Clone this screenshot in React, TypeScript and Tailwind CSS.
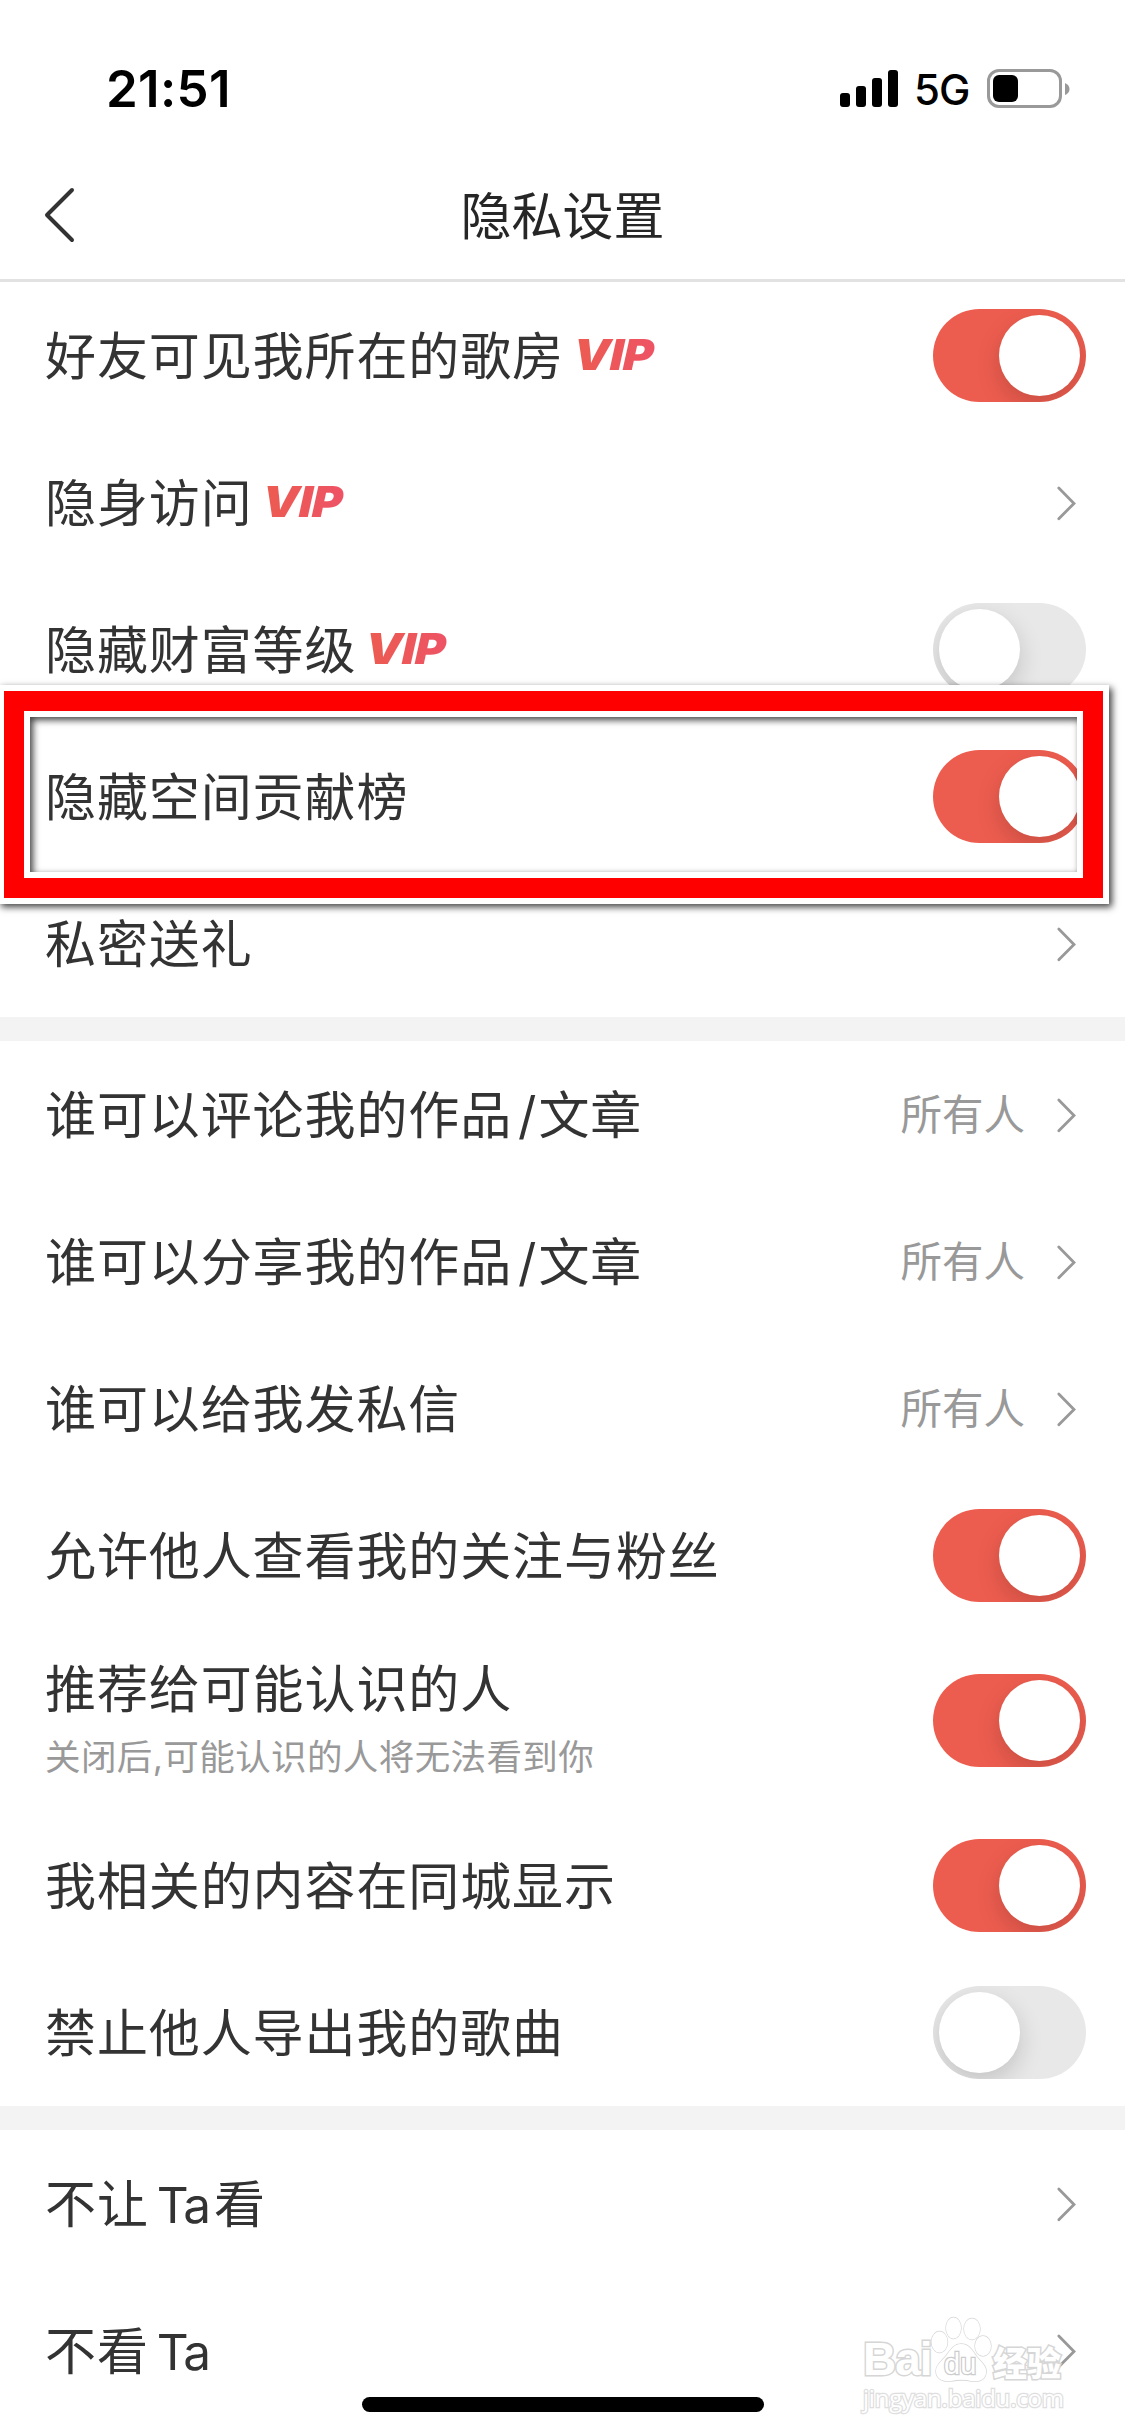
import type { ReactNode } from "react";

function Chevron() {
  return (
    <svg className="block h-9 w-6 shrink-0" viewBox="0 0 24 36" fill="none" stroke="#999999" strokeWidth="2.8" strokeLinecap="round" strokeLinejoin="miter">
      <path d="M4.8 3.1 L20 18.4 L4.8 33.7" />
    </svg>
  );
}

function Toggle({ on }: { on: boolean }) {
  return (
    <span
      className={
        on
          ? "flex h-[93px] w-[153px] shrink-0 justify-end overflow-hidden rounded-full bg-[#ed5d4f] p-1.5"
          : "flex h-[93px] w-[153px] shrink-0 justify-start overflow-hidden rounded-full bg-[#e8e8e8] p-1.5"
      }
    >
      <span className="size-[81px] rounded-full bg-white shadow-[0_9px_24px_rgba(0,0,0,0.16)]" />
    </span>
  );
}

function Vip() {
  return (
    <span className="mb-[3px] ml-[5px] inline-block w-[84px] origin-left scale-x-[1.1] -skew-x-2 bg-gradient-to-r from-[#ec5c4f] to-[#ee5266] bg-clip-text pl-1 font-['Inter'] text-[42.5px] leading-[50px] font-black tracking-[-0.5px] text-transparent italic">
      VIP
    </span>
  );
}

type RowProps = { label: ReactNode; vip?: boolean; hint?: string; value?: string; toggle?: boolean };

function Row({ label, vip, hint, value, toggle }: RowProps) {
  return (
    <div className={hint ? "flex h-[183px] items-center justify-between pl-[45px]" : "flex h-[147px] items-center justify-between pl-[45px]"}>
      <div className={hint ? "flex flex-col" : "flex flex-col pt-[2px]"}>
        <div className="flex items-center whitespace-pre text-[51px] leading-[74px] tracking-[0.9px] text-[#333333]">
          {label}
          {vip && <Vip />}
        </div>
        {hint && <div className="pt-[1px] text-[35.5px] leading-[60px] tracking-[0.4px] text-[#999999]">{hint}</div>}
      </div>
      {toggle === undefined ? (
        <div className="flex items-center gap-[29px] pr-[47px]">
          {value && <span className="pt-[1px] text-[41.5px] leading-[60px] text-[#999999]">{value}</span>}
          <Chevron />
        </div>
      ) : (
        <div className="pr-[39px]">
          <Toggle on={toggle} />
        </div>
      )}
    </div>
  );
}

function Section({ children }: { children: ReactNode }) {
  return <section className="flex flex-col">{children}</section>;
}

function Divider() {
  return <div className="h-6 bg-[#f3f3f3]" />;
}

function Slash() {
  return <span className="mr-[1px] ml-[6px]">/</span>;
}

function Ta() {
  return <span className="ml-[8px] text-[49.5px] tracking-[-2px]">Ta</span>;
}

function StatusBar() {
  return (
    <div className="flex h-[132px] items-start justify-between pt-[58px] pr-[55px] pl-[106px] font-['Inter'] text-black">
      <span className="text-[51px] leading-[61px] font-semibold tracking-[0.3px]">21:51</span>
      <div className="flex h-[61px] items-center">
        <div className="flex h-[37px] items-end gap-1.5">
          <span className="h-3.5 w-2.5 rounded-[3px] bg-black" />
          <span className="h-[21px] w-2.5 rounded-[3px] bg-black" />
          <span className="h-[29px] w-2.5 rounded-[3px] bg-black" />
          <span className="h-[37px] w-2.5 rounded-[3px] bg-black" />
        </div>
        <span className="ml-4 w-[56px] pt-[3px] text-[42px] leading-[50px] font-medium tracking-[-1px]">5G</span>
        <div className="ml-[17px] h-[39px] w-[75px] rounded-[12px] border-[3px] border-[#999999] p-[3px]">
          <div className="h-[27px] w-[25px] rounded-[6px] bg-black" />
        </div>
        <svg className="ml-[3px] h-3 w-[5px]" viewBox="0 0 5 12" fill="#999999">
          <path d="M0 0 Q4.5 2 4.5 6 Q4.5 10 0 12 Z" />
        </svg>
      </div>
    </div>
  );
}

function Watermark() {
  return (
    <div className="absolute top-[2312px] left-[863px] flex w-[210px] flex-col text-white [paint-order:stroke_fill]">
      <div className="flex h-[70px] items-end">
        <span className="w-[68px] font-['Liberation_Sans'] text-[46px] leading-[46px] font-bold tracking-[-1px] [-webkit-text-stroke:3px_#d6d6d6]">Bai</span>
        <div className="relative h-[66px] w-[61px]">
          <svg className="block h-[66px] w-[61px]" viewBox="0 0 61 66" fill="#ffffff" stroke="#d8d8d8" strokeWidth="1.4">
            <ellipse cx="8.500" cy="26" rx="8" ry="10.500" />
            <ellipse cx="22.500" cy="12" rx="7.500" ry="10.500" />
            <ellipse cx="41" cy="13" rx="8" ry="10.500" />
            <ellipse cx="52" cy="30" rx="8" ry="10" />
            <path d="M30 28 C38 28 41 34 46 41 C52 48 56 51 55 57 C54 65 46 66 40 65 C33 63 26 64 20 65 C12 66 5 63 5 55 C5 49 10 46 15 40 C20 33 23 28 30 28 Z" />
          </svg>
          <span className="absolute top-[34px] left-[13px] font-['Liberation_Sans'] text-[29px] leading-[28px] [-webkit-text-stroke:2.5px_#cccccc]">du</span>
        </div>
        <span className="ml-px font-['Noto_Sans_CJK_SC'] text-[34px] leading-[41px] font-black [-webkit-text-stroke:3px_#d6d6d6]">经验</span>
      </div>
      <span className="font-['Open_Sans'] text-[24px] leading-[32px] tracking-[-0.2px] [-webkit-text-stroke:2.5px_#dedede]">jingyan.baidu.com</span>
    </div>
  );
}

// Red rectangle calling out the contribution list row
function Highlight() {
  return (
    <div className="pointer-events-none absolute top-[685px] left-[-2px] h-[219px] w-[1111px] border-[6px] border-white shadow-[3px_3px_7px_rgba(0,0,0,0.75)]">
      <div className="h-full border-[20px] border-[#ff0000]">
        <div className="h-full border-[6px] border-white shadow-[inset_3px_3px_7px_rgba(0,0,0,0.75)]" />
      </div>
    </div>
  );
}

export default function App() {
  return (
    <main className="relative h-[2436px] w-[1125px] overflow-hidden bg-white font-['Inter','Noto_Sans_CJK_SC',sans-serif]">
      <StatusBar />
      <header className="flex h-[150px] items-center border-b-[3px] border-[#e2e2e2]">
        <div className="flex w-[200px] pt-[19px] pl-[42px]">
          <svg className="h-14 w-9" viewBox="0 0 36 56" fill="none" stroke="#333333" strokeWidth="4" strokeLinecap="round" strokeLinejoin="round">
            <path d="M30 3 L5 28 L30 53" />
          </svg>
        </div>
        <h1 className="flex-1 pt-[22px] text-center text-[51px] leading-[74px] text-[#262626]">隐私设置</h1>
        <div className="w-[200px]" />
      </header>

      <Section>
        <Row label="好友可见我所在的歌房" vip toggle={true} />
        <Row label="隐身访问" vip />
        <Row label="隐藏财富等级" vip toggle={false} />
        <Row label="隐藏空间贡献榜" toggle={true} />
        <Row label="私密送礼" />
      </Section>
      <Divider />
      <Section>
        <Row label={<span>谁可以评论我的作品<Slash />文章</span>} value="所有人" />
        <Row label={<span>谁可以分享我的作品<Slash />文章</span>} value="所有人" />
        <Row label="谁可以给我发私信" value="所有人" />
        <Row label="允许他人查看我的关注与粉丝" toggle={true} />
        <Row label="推荐给可能认识的人" hint="关闭后,可能认识的人将无法看到你" toggle={true} />
        <Row label="我相关的内容在同城显示" toggle={true} />
        <Row label="禁止他人导出我的歌曲" toggle={false} />
      </Section>
      <Divider />
      <Section>
        <Row label={<span>不让<Ta /><span className="ml-[5px]">看</span></span>} />
        <Row label={<span>不看<Ta /></span>} />
      </Section>

      <Highlight />
      <Watermark />
      <div className="absolute top-[2397px] left-[362px] h-[15px] w-[402px] rounded-full bg-black" />
    </main>
  );
}
